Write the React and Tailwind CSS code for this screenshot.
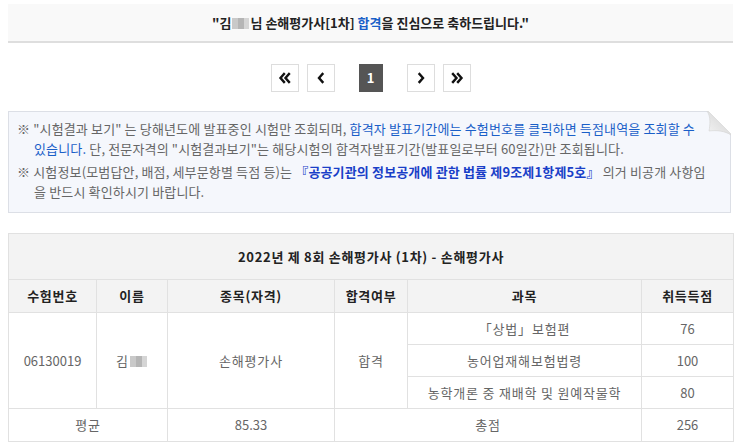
import React from 'react';

const font = "font-['Malgun_Gothic','Noto_Sans_CJK_KR',sans-serif]";

const Blur = () => (
  <span className="inline-flex align-middle mx-[1px] -mt-[2px]">
    <span className="inline-block w-[6px] h-[11px] bg-[#c9c9c9]" />
    <span className="inline-block w-[6px] h-[11px] bg-[#b5b5b5]" />
    <span className="inline-block w-[5px] h-[11px] bg-[#d5d5d5]" />
  </span>
);

const Chevron = ({ dir = 'left', double = false }) => (
  <svg width="14" height="12" viewBox="0 0 14 12" fill="none" stroke="#111" strokeWidth="2.4" strokeLinecap="square">
    {dir === 'left' ? (
      double ? (
        <>
          <path d="M6 2 L2.5 6 L6 10" />
          <path d="M11 2 L7.5 6 L11 10" />
        </>
      ) : (
        <path d="M8.5 2 L5 6 L8.5 10" />
      )
    ) : double ? (
      <>
        <path d="M3 2 L6.5 6 L3 10" />
        <path d="M8 2 L11.5 6 L8 10" />
      </>
    ) : (
      <path d="M5.5 2 L9 6 L5.5 10" />
    )}
  </svg>
);

const PageBtn = ({ children }) => (
  <button className="w-[28px] h-[28px] bg-white border border-[#ddd] flex items-center justify-center">
    {children}
  </button>
);

const cell = 'border border-[#e1e1e1] text-center';
const th = `${cell} text-[13px] font-bold text-[#222] tracking-[0.7px]`;

export default function App() {
  return (
    <div className={`${font} bg-white w-[736px] h-[444px] overflow-hidden pt-[4px] pl-[8px] pr-[3px]`}>
      {/* congrats band */}
      <div className="h-[39px] bg-[#f9f9f9] border-b-2 border-[#dedede] flex items-center justify-center text-[13px] font-bold text-[#222]">
        <span>
          "김<Blur />님 손해평가사[1차] <span className="text-[#1a5fc8]">합격</span>을 진심으로 축하드립니다."
        </span>
      </div>

      {/* pagination */}
      <div className="h-[68px] flex items-center justify-center pt-[1px]">
        <div className="flex items-center">
          <PageBtn><Chevron dir="left" double /></PageBtn>
          <div className="w-[8px]" />
          <PageBtn><Chevron dir="left" /></PageBtn>
          <div className="w-[24px]" />
          <div className="w-[24px] h-[28px] bg-[#555] text-white font-bold text-[13px] flex items-center justify-center">1</div>
          <div className="w-[24px]" />
          <PageBtn><Chevron dir="right" /></PageBtn>
          <div className="w-[8px]" />
          <PageBtn><Chevron dir="right" double /></PageBtn>
        </div>
      </div>

      {/* notice box */}
      <div className="relative mr-[2px] h-[102px] bg-[#f5f7fc] border border-[#dcdfe6] pl-[25px] pr-[9px] pt-[7px] text-[13px] tracking-[0.15px] leading-[20px] text-[#666]">
        <p className="whitespace-nowrap -indent-[17px]">
          ※ "시험결과 보기" 는 당해년도에 발표중인 시험만 조회되며, <span className="text-[#1a5fc8]">합격자 발표기간에는 수험번호를 클릭하면 득점내역을 조회할 수</span>
          <br />
          <span className="text-[#1a5fc8]">있습니다.</span> 단, 전문자격의 "시험결과보기"는 해당시험의 합격자발표기간(발표일로부터 60일간)만 조회됩니다.
        </p>
        <p className="whitespace-nowrap -indent-[17px] mt-[3px]">
          ※ 시험정보(모범답안, 배점, 세부문항별 득점 등)는 <span className="text-[#1a3fc8] font-bold">『공공기관의 정보공개에 관한 법률 제9조제1항제5호』</span> 의거 비공개 사항임
          <br />
          을 반드시 확인하시기 바랍니다.
        </p>
        {/* folded corner */}
        <svg className="absolute -top-px -right-px" width="26" height="26" viewBox="0 0 26 26">
          <defs>
            <linearGradient id="flap" x1="0" y1="1" x2="1" y2="0">
              <stop offset="0" stopColor="#f4f4f4" />
              <stop offset="0.6" stopColor="#dedede" />
              <stop offset="1" stopColor="#c8c8c8" />
            </linearGradient>
          </defs>
          <polygon points="2,0 26,0 26,24" fill="#fff" />
          <path d="M2 0 C6 6 5 14 4 20 C12 19 20 20 26 24 L26 23 L3 0 Z" fill="url(#flap)" stroke="#d4d4d4" strokeWidth="0.6" />
        </svg>
      </div>

      {/* result table */}
      <table className="mt-[20px] w-[725px] border-collapse table-fixed text-[13px] tracking-[0.8px] text-[#666]">
        <colgroup>
          <col className="w-[88px]" />
          <col className="w-[71px]" />
          <col className="w-[167px]" />
          <col className="w-[73px]" />
          <col className="w-[234px]" />
          <col className="w-[92px]" />
        </colgroup>
        <thead>
          <tr className="h-[46px] bg-[#f3f3f3]">
            <th colSpan={6} className={th}>
              2022년 제 8회 손해평가사 (1차) - 손해평가사
            </th>
          </tr>
          <tr className="h-[33px] bg-[#f3f3f3]">
            {['수험번호', '이름', '종목(자격)', '합격여부', '과목', '취득득점'].map((h) => (
              <th key={h} className={th}>{h}</th>
            ))}
          </tr>
        </thead>
        <tbody>
          <tr className="h-[32px]">
            <td rowSpan={3} className={`${cell} tracking-normal`}>06130019</td>
            <td rowSpan={3} className={cell}>김<Blur /></td>
            <td rowSpan={3} className={cell}>손해평가사</td>
            <td rowSpan={3} className={cell}>합격</td>
            <td className={cell}>「상법」보험편</td>
            <td className={`${cell} tracking-normal`}>76</td>
          </tr>
          <tr className="h-[32px]">
            <td className={cell}>농어업재해보험법령</td>
            <td className={`${cell} tracking-normal`}>100</td>
          </tr>
          <tr className="h-[32px]">
            <td className={cell}>농학개론 중 재배학 및 원예작물학</td>
            <td className={`${cell} tracking-normal`}>80</td>
          </tr>
          <tr className="h-[33px]">
            <td colSpan={2} className={cell}>평균</td>
            <td className={`${cell} tracking-normal`}>85.33</td>
            <td colSpan={2} className={cell}>총점</td>
            <td className={`${cell} tracking-normal`}>256</td>
          </tr>
        </tbody>
      </table>
    </div>
  );
}
